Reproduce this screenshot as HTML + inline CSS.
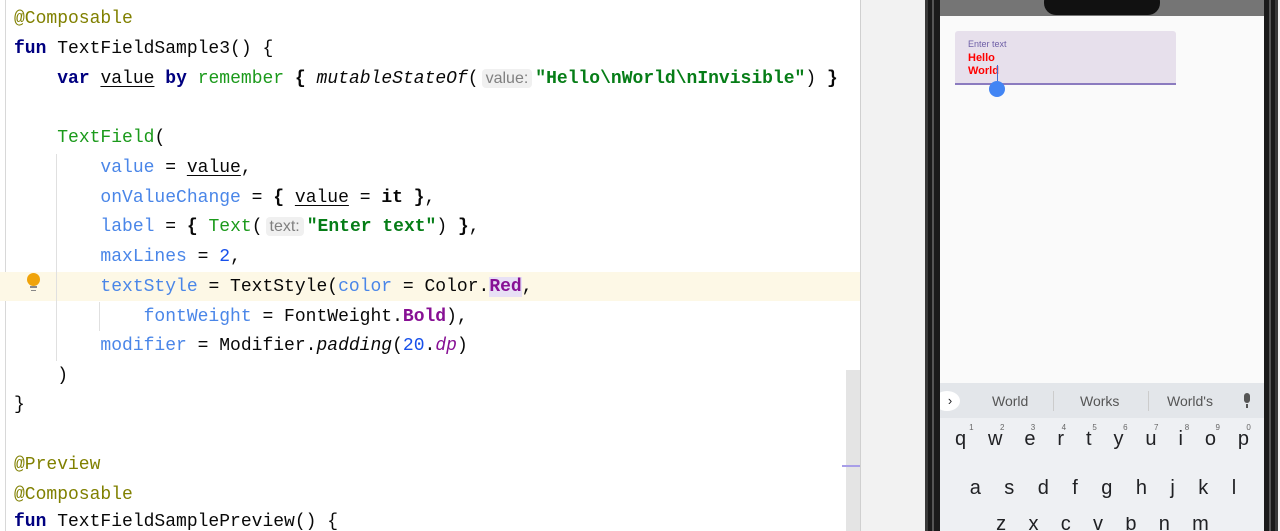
<!DOCTYPE html>
<html><head><style>
html,body{margin:0;width:1280px;height:531px;overflow:hidden}
body{background:#fff;position:relative;font-family:"Liberation Mono",monospace}
.ed{position:absolute;left:0;top:0;width:860px;height:531px;background:#fff;overflow:hidden}
.gl{position:absolute;left:5px;top:0;width:1px;height:531px;background:#d8d8d8}
.ln{position:absolute;left:14px;font-size:18px;line-height:20px;white-space:pre;color:#080808}
.k{color:#000080;font-weight:bold}
.an{color:#808000}
.g{color:#1b9a1b}
.p{color:#4a86e8}
.n{color:#1750eb}
.s{color:#067d17;font-weight:bold}
.pu{color:#871094;font-weight:bold}
.i{font-style:italic}
.u{text-decoration:underline;text-underline-offset:3px}
.b{font-weight:bold}
.hint{font-family:"Liberation Sans",sans-serif;font-size:16px;color:#808080;background:#f0f0f0;border-radius:4px;padding:1px 4px;margin:0 3px}
.right{position:absolute;left:860px;top:0;width:420px;height:531px;background:#f2f2f2;border-left:1px solid #d0d0d0;box-sizing:border-box}
.phone{position:absolute;left:925px;top:-20px;width:353px;height:551px;background:#1a1a1a;border-radius:20px 20px 0 0;box-sizing:border-box;border-left:3px solid #3a3a3a;border-right:3px solid #3a3a3a}
.phone:after{content:"";position:absolute;left:4px;right:4px;top:0;bottom:0;border-left:2px solid #555;border-right:2px solid #555}
.scr{position:absolute;left:940px;top:0;width:324px;height:531px;background:#fafafa;overflow:hidden}
.kb{font-family:"Liberation Sans",sans-serif;color:#202124;overflow:hidden}
</style></head><body>
<div class="ed">
<div class="gl"></div>
<div style="position:absolute;left:0;top:272px;width:860px;height:29px;background:#fdf8e6"></div>
<div style="position:absolute;left:56px;top:154px;width:1px;height:207px;background:#e0e0e0"></div>
<div style="position:absolute;left:99px;top:302px;width:1px;height:29px;background:#e0e0e0"></div>
<div style="position:absolute;left:27px;top:273px;width:13px;height:13px;border-radius:50%;background:#f0a30a"></div>
<div style="position:absolute;left:30px;top:286px;width:7px;height:2px;background:#888"></div>
<div style="position:absolute;left:31px;top:290px;width:5px;height:1px;background:#888"></div>
<div class="ln" style="top:9px"><span class="an">@Composable</span></div>
<div class="ln" style="top:39px"><span class="k">fun</span> TextFieldSample3() {</div>
<div class="ln" style="top:69px">    <span class="k">var</span> <span class="u">value</span> <span class="k">by</span> <span class="g">remember</span> <span class="b">{</span> <span class="i">mutableStateOf</span>(<span class="hint">value:</span><span class="s">"Hello\nWorld\nInvisible"</span>) <span class="b">}</span></div>
<div class="ln" style="top:128px">    <span class="g">TextField</span>(</div>
<div class="ln" style="top:158px">        <span class="p">value</span> = <span class="u">value</span>,</div>
<div class="ln" style="top:188px">        <span class="p">onValueChange</span> = <span class="b">{</span> <span class="u">value</span> = <span class="b">it }</span>,</div>
<div class="ln" style="top:217px">        <span class="p">label</span> = <span class="b">{</span> <span class="g">Text</span>(<span class="hint">text:</span><span class="s">"Enter text"</span>) <span class="b">}</span>,</div>
<div class="ln" style="top:247px">        <span class="p">maxLines</span> = <span class="n">2</span>,</div>
<div class="ln" style="top:277px">        <span class="p">textStyle</span> = TextStyle(<span class="p">color</span> = Color.<span class="pu" style="background:#e8e0f5">Red</span>,</div>
<div class="ln" style="top:307px">            <span class="p">fontWeight</span> = FontWeight.<span class="pu">Bold</span>),</div>
<div class="ln" style="top:336px">        <span class="p">modifier</span> = Modifier.<span class="i">padding</span>(<span class="n">20</span>.<span class="pu i" style="font-weight:normal">dp</span>)</div>
<div class="ln" style="top:366px">    )</div>
<div class="ln" style="top:395px">}</div>
<div class="ln" style="top:455px"><span class="an">@Preview</span></div>
<div class="ln" style="top:485px"><span class="an">@Composable</span></div>
<div class="ln" style="top:512px"><span class="k">fun</span> TextFieldSamplePreview() {</div>
<div style="position:absolute;left:846px;top:370px;width:14px;height:161px;background:#e4e4e4"></div>
<div style="position:absolute;left:842px;top:465px;width:18px;height:2px;background:#a89ee8"></div>
</div>
<div class="right"></div>
<div class="phone"></div>
<div class="scr">
 <div style="position:absolute;left:0;top:0;width:324px;height:16px;background:#757575"></div>
 <div style="position:absolute;left:104px;top:-10px;width:116px;height:25px;background:#111;border-radius:12px"></div>
 <div style="position:absolute;left:15px;top:31px;width:221px;height:52px;background:#e7e0ec;border-radius:3px 3px 0 0;border-bottom:2px solid #8b7bbf"></div>
 <div style="position:absolute;left:28px;top:39px;font:9px 'Liberation Sans',sans-serif;color:#6e5fa6">Enter text</div>
 <div style="position:absolute;left:28px;top:52px;font:bold 11px/13px 'Liberation Sans',sans-serif;color:#f00">Hello<br>World</div>
 <div style="position:absolute;left:57px;top:65px;width:1px;height:16px;background:#3a6fd8"></div>
 <div style="position:absolute;left:49px;top:81px;width:16px;height:16px;border-radius:50%;background:#4285f4"></div>
 <div class="kb" style="position:absolute;left:0;top:383px;width:324px;height:148px;background:#eef0f3">
  <div style="position:absolute;left:0;top:0;width:324px;height:35px;background:#e3e6ea"></div>
  <div style="position:absolute;left:-6px;top:8px;width:20px;height:20px;border-radius:50%;background:#fff;font-size:13px;text-align:center;line-height:20px;padding-left:6px;box-sizing:content-box">›</div>
  <div style="position:absolute;left:52px;top:10px;font-size:14px;color:#555">World</div>
  <div style="position:absolute;left:113px;top:8px;width:1px;height:20px;background:#ccc"></div>
  <div style="position:absolute;left:140px;top:10px;font-size:14px;color:#555">Works</div>
  <div style="position:absolute;left:208px;top:8px;width:1px;height:20px;background:#ccc"></div>
  <div style="position:absolute;left:227px;top:10px;font-size:14px;color:#555">World's</div>
  <div style="position:absolute;left:304px;top:10px;width:6px;height:10px;border-radius:3px;background:#555"></div>
  <div style="position:absolute;left:306px;top:21px;width:2px;height:4px;background:#555"></div>
  <div style="position:absolute;left:0;top:44px;width:324px;font-size:20px;line-height:24px;display:flex;justify-content:space-around;padding:0 4px;box-sizing:border-box"><span>q</span><span>w</span><span>e</span><span>r</span><span>t</span><span>y</span><span>u</span><span>i</span><span>o</span><span>p</span></div>
  <div style="position:absolute;left:0;top:40px;width:324px;font-size:8px;line-height:10px;color:#666;display:flex;justify-content:space-around;padding:0 0 0 16px;box-sizing:border-box"><span>1</span><span>2</span><span>3</span><span>4</span><span>5</span><span>6</span><span>7</span><span>8</span><span>9</span><span>0</span></div>
  <div style="position:absolute;left:18px;top:93px;width:290px;font-size:20px;line-height:24px;display:flex;justify-content:space-around"><span>a</span><span>s</span><span>d</span><span>f</span><span>g</span><span>h</span><span>j</span><span>k</span><span>l</span></div>
  <div style="position:absolute;left:45px;top:134px;width:235px;font-size:20px;line-height:14px;height:14px;overflow:hidden;display:flex;justify-content:space-around"><span>z</span><span>x</span><span>c</span><span>v</span><span>b</span><span>n</span><span>m</span></div>
 </div>
</div>
</body></html>
